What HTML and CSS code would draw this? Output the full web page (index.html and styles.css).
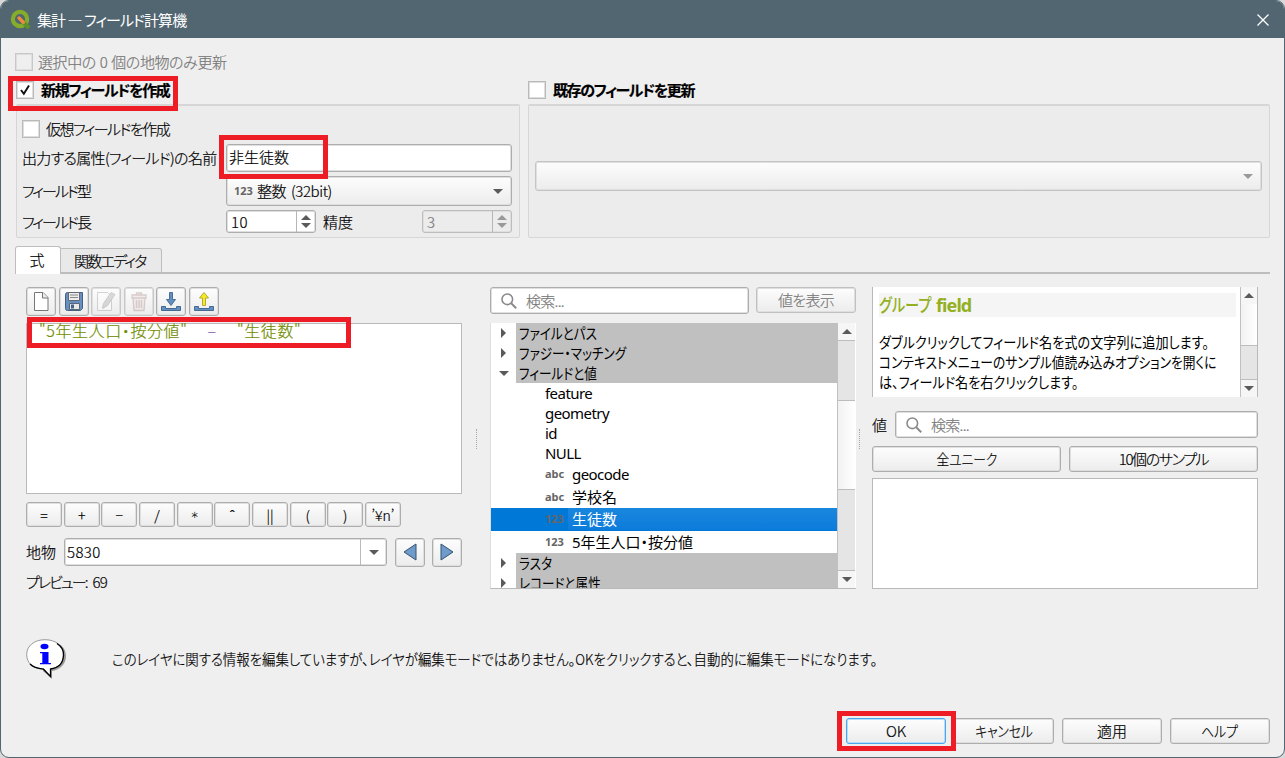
FILE: index.html
```html
<!DOCTYPE html>
<html lang="ja">
<head>
<meta charset="utf-8">
<title>集計 — フィールド計算機</title>
<link rel="stylesheet" href="styles.css">
</head>
<body>
<div class="window">
  <header class="titlebar">
    <svg class="logo" viewBox="0 0 22 22"><circle cx="10.5" cy="10.5" r="7.500" fill="none" stroke="#86ac2b" stroke-width="4.400"/><path d="M13 13l7 7" stroke="#5b922c" stroke-width="4.500"/><path d="M9.500 9.500l4.500 4.500" stroke="#ee8b3c" stroke-width="3.600" stroke-linecap="round"/></svg>
    <h1 class="t-title">集計 — フィールド計算機</h1>
    <svg class="close" viewBox="0 0 14 14"><path d="M1.500 1.500l11 11M12.500 1.500l-11 11" stroke="#fff" stroke-width="1.300"/></svg>
  </header>
  <main class="content">
    <div class="check-row only-selected"><span class="box off"></span><span class="t-only">選択中の 0 個の地物のみ更新</span></div>
    <div class="groups">
      <section class="group create">
        <div class="check-row head"><span class="box"><svg viewBox="0 0 18 18"><path d="M4.500 9l3.200 4.300L13.500 4" fill="none" stroke="#111" stroke-width="2.200"/></svg></span><b class="t-create">新規フィールドを作成</b></div>
        <div class="frame">
          <div class="check-row virtual"><span class="box"></span><span class="t-virtual">仮想フィールドを作成</span></div>
          <div class="form">
            <label class="t-outname">出力する属性(フィールド)の名前</label>
            <div class="input name">非生徒数</div>
            <label class="t-ftype">フィールド型</label>
            <div class="combo type"><i class="tag">123</i><span class="t-int">整数 (32bit)</span><i class="tri down"></i></div>
            <label class="t-ftype">フィールド長</label>
            <div class="spins">
              <div class="spin"><span class="t-ten">10</span><div class="arrows"><i class="tri up"></i><i class="tri down"></i></div></div>
              <span class="precision">精度</span>
              <div class="spin off"><span>3</span><div class="arrows"><i class="tri up"></i><i class="tri down"></i></div></div>
            </div>
          </div>
        </div>
      </section>
      <section class="group update">
        <div class="check-row head"><span class="box"></span><b class="t-update">既存のフィールドを更新</b></div>
        <div class="frame"><div class="combo off"><i class="tri down"></i></div></div>
      </section>
    </div>
    <nav class="tabs"><span class="tab active">式</span><span class="tab t-tab">関数エディタ</span><span class="rule"></span></nav>
    <div class="panes">
      <section class="pane-expression">
        <div class="toolbar">
          <button class="tool"><svg viewBox="0 0 30 30"><path d="M8.500 5.500h8.500L22 10.500V23.500H8.500z" fill="#fff" stroke="#777"/><path d="M16.500 5.500v5.500h5.500" fill="#eee" stroke="#777"/></svg></button>
          <button class="tool"><svg viewBox="0 0 30 30"><path d="M6.500 7.500q0-2 2-2h15v16l-2 2h-13q-2 0-2-2z" fill="#6590bf" stroke="#46617e"/><path d="M9.500 5.500h11v8h-11z" fill="#ededed" stroke="#667"/><path d="M11 8h8M11 10.500h8" stroke="#888"/><path d="M10.500 16.500h10v6h-10z" fill="#e8e8e8" stroke="#567"/><path d="M12 17.500h3v4h-3z" fill="#456487"/></svg></button>
          <button class="tool off"><svg viewBox="0 0 30 30"><path d="M6.500 5.500h10l4 4v14h-14z" fill="#fff" stroke="#999"/><path d="M11.500 21.500l1-5L20 5.500l4 2-7.500 11z" fill="#aaa" stroke="#888"/></svg></button>
          <button class="tool off"><svg viewBox="0 0 30 30"><path d="M9 11h12l-1 12.500H10zM8 8h14v3H8zM12.500 8V6h5v2" fill="#ecd9d9" stroke="#a88989" stroke-width="1.300"/><path d="M12.500 13v8M15 13v8M17.500 13v8" stroke="#a88989" stroke-width="1.400"/></svg></button>
          <button class="tool"><svg viewBox="0 0 30 30"><path d="M5.500 19.500h4v2h11v-2h4v4h-19z" fill="#638fc0" stroke="#456a92"/><path d="M13.500 5.500h3v7h3L15 18.500 10.500 12.500h3z" fill="#638fc0" stroke="#4d6f94"/></svg></button>
          <button class="tool"><svg viewBox="0 0 30 30"><path d="M5.500 19.500h4v2h11v-2h4v4h-19z" fill="#638fc0" stroke="#456a92"/><path d="M13.500 18.500h3V11h3L15 5.500 10.500 11h3z" fill="#f5ea26" stroke="#b7aa30"/></svg></button>
        </div>
        <div class="editor"><span class="t-f1">"5年生人口・按分値"</span><span class="op">–</span><span class="t-f2">"生徒数"</span></div>
        <div class="operators"><button>=</button><button>+</button><button>−</button><button>/</button><button class="star">∗</button><button>ˆ</button><button>||</button><button>(</button><button>)</button><button>’¥n’</button></div>
        <div class="feature"><label>地物</label><div class="input edit"><span class="t-value">5830</span><i class="drop"><i class="tri down"></i></i></div>
          <button class="tool"><svg viewBox="0 0 30 30"><path d="M21 6v16L9 14z" fill="#6e9bca" stroke="#34506f"/></svg></button>
          <button class="tool"><svg viewBox="0 0 30 30"><path d="M9 6v16l12-8z" fill="#6e9bca" stroke="#34506f"/></svg></button></div>
        <div class="preview"><span class="t-preview">プレビュー:</span><span class="t-result">69</span></div>
      </section>
      <i class="grip"></i>
      <section class="pane-functions">
        <div class="search-row"><div class="input search"><svg viewBox="0 0 18 18"><circle cx="7.300" cy="7.300" r="5.300" fill="none" stroke="#8a8a8a" stroke-width="1.600"/><path d="M11.200 11.200l5 5" stroke="#8a8a8a" stroke-width="2"/></svg><span class="t-search">検索...</span></div><button class="push off"><span class="t-show">値を表示</span></button></div>
        <div class="tree">
          <div class="rows">
            <div class="row parent"><i class="tri side"></i><div><span class="narrow">ファイルとパス</span></div></div>
            <div class="row parent"><i class="tri side"></i><div><span class="narrow">ファジー・マッチング</span></div></div>
            <div class="row parent"><i class="tri down"></i><div><span class="narrow">フィールドと値</span></div></div>
            <div class="row t-latin">feature</div>
            <div class="row t-latin">geometry</div>
            <div class="row t-latin">id</div>
            <div class="row t-latin">NULL</div>
            <div class="row tall"><i class="tag">abc</i><span class="t-latin">geocode</span></div>
            <div class="row tall"><i class="tag">abc</i><span>学校名</span></div>
            <div class="row tall selected"><i class="tag">123</i><span class="current">生徒数</span></div>
            <div class="row tall"><i class="tag">123</i><span>5年生人口・按分値</span></div>
            <div class="row parent"><i class="tri side"></i><div><span class="narrow">ラスタ</span></div></div>
            <div class="row parent"><i class="tri side"></i><div><span class="narrow">レコードと属性</span></div></div>
          </div>
          <div class="scroll"><i class="step"><i class="tri up"></i></i><i class="groove g-top"></i><i class="thumb"></i><i class="groove g-bottom"></i><i class="step"><i class="tri down"></i></i></div>
        </div>
      </section>
      <i class="grip second"></i>
      <section class="pane-help">
        <div class="help"><div class="doc"><h2><span class="t-group">グループ</span><b class="t-field">field</b></h2>
          <p><span class="t-l1">ダブルクリックしてフィールド名を式の文字列に追加します。</span><br><span class="t-l2">コンテキストメニューのサンプル値読み込みオプションを開くに</span><br><span class="t-l3">は、フィールド名を右クリックします。</span></p></div>
          <div class="scroll"><i class="step"><i class="tri up"></i></i><i class="thumb"></i><i class="groove"></i><i class="step"><i class="tri down"></i></i></div></div>
        <div class="value-row"><label>値</label><div class="input search"><svg viewBox="0 0 18 18"><circle cx="7.300" cy="7.300" r="5.300" fill="none" stroke="#8a8a8a" stroke-width="1.600"/><path d="M11.200 11.200l5 5" stroke="#8a8a8a" stroke-width="2"/></svg><span class="t-search">検索...</span></div></div>
        <div class="samples"><button class="push"><span class="narrow-mid">全ユニーク</span></button><button class="push"><span class="t-ten-samples">10個のサンプル</span></button></div>
        <div class="list"></div>
      </section>
    </div>
    <div class="notice">
      <svg viewBox="0 0 40 40"><path d="M22 2C33 3 40 8 40 17C40 26 33 31 26 32V40L17 32Z" fill="#999"/><path d="M19 .7C30 .7 37.500 7 37.500 15.500C37.500 24 32 29 24.500 30V38L17.500 30C7 30 .700 24 .700 15.500C.700 7 8 .700 19 .700z" fill="#fff" stroke="#999"/><path d="M31 4.500Q38 9 37.500 16.500C37 25 32 29 24.500 30V37.500L17.500 30.200Q8 29 4 25" fill="none" stroke="#000" stroke-width="1.300"/><ellipse cx="18.500" cy="7.500" rx="4" ry="2.700" fill="#00f"/><path d="M14 13h8.500v11H25v1.300H14V24h2.300v-9.700H14z" fill="#00f"/></svg>
      <span class="t-notice">このレイヤに関する情報を編集していますが、レイヤが編集モードではありません。OKをクリックすると、自動的に編集モードになります。</span>
    </div>
    <footer class="buttons"><button class="push default">OK</button><button class="push"><span class="narrow-mid">キャンセル</span></button><button class="push">適用</button><button class="push"><span class="narrow-mid">ヘルプ</span></button></footer>
  </main>
  <div class="mark m1"></div><div class="mark m2"></div><div class="mark m3"></div><div class="mark m4"></div>
</div>
</body>
</html>
```
FILE: styles.css
```css
* { box-sizing: border-box; }
body { margin: 0; background: #d8d8d8; font: 15px/20px "Noto Sans CJK JP", sans-serif; font-feature-settings: "palt"; color: #000; overflow: hidden; }
h1, h2, p { margin: 0; font-weight: 400; }
b { font-weight: 700; }
i { font-style: normal; }
button { font: inherit; color: inherit; padding: 0; margin: 0; font-feature-settings: inherit; }
svg { display: block; }

.window { position: relative; width: 1285px; height: 758px; border: 1px solid #516671; border-radius: 9px; background: #efefef; overflow: hidden; }
.titlebar { display: flex; align-items: center; height: 37px; padding: 0 14px 0 9px; background: #516671; color: #fff; }
.logo { width: 21px; height: 21px; }
.titlebar h1 { margin-left: 6px; font-size: 15px; white-space: nowrap; }
.close { width: 14px; height: 14px; margin-left: auto; }
.content { padding: 15px 14px 0 14px; white-space: nowrap; font-weight: 300; -webkit-text-stroke-width: .2px; }

/* text metrics */
.t-title { letter-spacing: -.92px; }
.t-only { letter-spacing: -.41px; word-spacing: 1px; }
.t-create { letter-spacing: -1.32px; }
.t-update { letter-spacing: -1.41px; }
.t-virtual { letter-spacing: -1.5px; }
.t-outname { letter-spacing: -.68px; }
.t-ftype { letter-spacing: -1.9px; }
.t-int { letter-spacing: -.42px; word-spacing: 2px; }
.t-ten, .t-value { letter-spacing: .4px; }
.t-tab { letter-spacing: -1.75px; }
.t-f1, .t-f2 { letter-spacing: .6px; }
.t-preview { letter-spacing: -1.9px; }
.t-result { letter-spacing: -.9px; }
.t-search, .t-show { letter-spacing: -.7px; }
.t-latin { letter-spacing: -.55px; }
.t-ten-samples { letter-spacing: -1.37px; }
.narrow, .t-group, .t-l1, .t-l2, .t-l3, .t-notice { display: inline-block; transform-origin: 0 50%; }
.narrow { transform: scaleX(.84); }
.narrow-mid { display: inline-block; transform: scaleX(.85); }
.t-group { transform: scaleX(.79); width: 57px; }
.t-field { letter-spacing: -.9px; }
.t-l1 { transform: scaleX(.877); }
.t-l2 { transform: scaleX(.849); }
.t-l3 { transform: scaleX(.875); }
.t-notice { transform: scaleX(.894); }

.check-row { display: flex; align-items: center; height: 18px; gap: 7px; }
.box { width: 18px; height: 18px; border: 1px solid #b9b9b9; box-shadow: inset 0 0 0 1px #dedede; background: #fff; flex: none; }
.box svg { width: 16px; height: 16px; }
.box.off { background: #efefef; border-color: #c8c8c8; }
.only-selected { color: #777; gap: 5px; }
.groups { display: flex; gap: 8px; margin-top: 10px; }
.head { padding-left: 1px; }
.update .head { padding-left: 0; }
.frame { height: 134px; margin-top: 5px; border: 1px solid #d6d6d6; border-top-width: 2px; background: #ececec; border-radius: 2px; }
.create { width: 505px; }
.update { width: 742px; }
.create .frame { margin-left: 1px; padding: 14px 7px 0 5px; }
.virtual { gap: 6px; }
.form { display: grid; grid-template-columns: 204px 286px; grid-template-rows: 28px 30px 23px; row-gap: 4px; margin-top: 6px; align-items: center; }

.input, .combo, .spin, .push, .tool, .operators button { border: 1px solid #adadad; box-shadow: inset 0 0 0 1px #dfdfdf; border-radius: 3px; background: linear-gradient(#fdfdfd, #ececec); }
.input { background: #fff; }
.input.name { height: 28px; padding: 2px 0 0 2px; }
.combo { display: flex; align-items: center; }
.type { height: 30px; padding: 0 8px 0 7px; }
.type .tri { margin-left: auto; }
.tag { font: 700 11px/14px "Noto Sans", sans-serif; color: #666; -webkit-text-stroke-width: 0; }
.type .tag { width: 23px; }
.spins { display: flex; height: 23px; align-items: center; }
.spin { display: flex; width: 90px; height: 23px; background: #fff; padding-left: 4px; line-height: 21px; }
.spin.off { background: #ececec; color: #777; border-color: #bdbdbd; }
.arrows { width: 19px; margin-left: auto; border-left: 1px solid #b6b6b6; display: flex; flex-direction: column; gap: 3px; align-items: center; justify-content: center; }
.precision { width: 106px; padding-left: 7px; }
.tri { display: block; width: 0; height: 0; border: 5px solid transparent; flex: none; }
.tri.down { border-bottom: 0; border-top-color: #5a5a5a; }
.tri.up { border-top: 0; border-bottom-color: #5a5a5a; }
.tri.side { border-right: 0; border-left-color: #5a5a5a; margin: 0 3px 0 2px; }
.off .tri.down { border-top-color: #999; }
.off .tri.up { border-bottom-color: #999; }
.update .frame { padding: 55px 7px 0 6px; }
.update .combo { height: 30px; justify-content: flex-end; padding-right: 8px; border-color: #c4c4c4; }

.tabs { display: flex; align-items: flex-end; height: 28px; margin-top: 8px; }
.tab { height: 26px; padding: 2px 0 0 13px; width: 101px; border: 1px solid #bdbdbd; border-bottom-width: 2px; border-left: 0; border-radius: 0 3px 0 0; background: #e9e9e9; }
.tab.active { width: 46px; height: 28px; padding: 3px 2px 0 0; text-align: center; background: #fff; border: 1px solid #bdbdbd; border-bottom: 0; border-radius: 3px 3px 0 0; }
.rule { flex: 1; height: 2px; background: #bdbdbd; }

.panes { display: flex; margin: 13px 11px 0; height: 302px; }
.pane-expression { width: 436px; }
.toolbar { display: flex; gap: 2.600px; height: 30px; }
.tool { width: 30px; height: 29px; overflow: hidden; }
.tool svg { width: 30px; height: 30px; margin: -1px; }
.tool.off { border-color: #c8c8c8; }
.tool.off svg { opacity: .4; }
.editor { height: 171px; margin-top: 6px; border: 1px solid #b9b9b9; background: #fff; color: #718c00; padding: 0 0 0 12px; display: flex; font-size: 16px; line-height: 13px; }
.editor .op { color: #8959a8; margin: 0 21px 0 20px; }
.operators { display: flex; justify-content: space-between; margin-top: 8px; width: 375px; }
.operators button { width: 36px; height: 25px; line-height: 22px; font-size: 14px; }
.operators .star { font-family: "DejaVu Sans", sans-serif; font-size: 13px; }
.feature { display: flex; margin-top: 11px; height: 30px; }
.feature label { width: 38px; line-height: 28px; }
.edit { display: flex; width: 323px; height: 28px; padding-left: 2px; line-height: 26px; margin-right: 8px; }
.drop { width: 26px; margin-left: auto; border-left: 1px solid #bbb; display: flex; align-items: center; justify-content: center; }
.feature .tool + .tool { margin-left: 7px; }
.preview { display: flex; gap: 6px; margin-top: 4px; }
.grip { width: 0; height: 20px; border-left: 1px dotted #aaa; margin: 142px 13px 0 14px; flex: none; }
.grip.second { margin: 142px 12px 0 3px; }

.pane-functions { width: 366px; }
.search-row { display: flex; justify-content: space-between; }
.search { display: flex; width: 259px; height: 27px; align-items: center; padding-left: 9px; gap: 8px; color: #777; }
.search svg { width: 18px; height: 18px; }
.push { height: 26px; width: 100px; line-height: 22px; text-align: center; }
.push.off { color: #777; border-color: #c0c0c0; }
.tree { display: flex; height: 266px; margin-top: 9px; border-bottom: 1px solid #b9b9b9; border-left: 1px solid #ddd; background: #fff; overflow: hidden; font-weight: 400; -webkit-text-stroke-width: 0; }
.rows { width: 346px; font-family: "Noto Sans", "Noto Sans CJK JP", sans-serif; }
.row { height: 20px; line-height: 20px; padding-left: 54px; display: flex; align-items: center; }
.row.parent { padding-left: 8px; }
.row.parent > div { margin-left: auto; width: 321px; padding-left: 3px; background: #c0c0c0; height: 20px; }
.row.tall { height: 22.500px; }
.row .tag { width: 27px; }
.selected { background: #0078d7; color: #fff; }
.selected .current { flex: 1; margin-left: -4px; padding-left: 4px; background: linear-gradient(#1a87de, #0c7cdb); line-height: 22px; }
.scroll { width: 18px; border-left: 1px solid #c0c0c0; display: flex; flex-direction: column; background: #fff; flex: none; }
.step { height: 17px; display: flex; align-items: center; justify-content: center; background: #f6f6f6; flex: none; }
.groove { background: #e5e5e5; border: solid #bdbdbd; border-width: 1px 0; }
.thumb { background: linear-gradient(90deg, #f2f2f2, #fff); }
.g-top { height: 61px; }
.g-bottom { height: 82px; }
.tree .thumb { height: 88px; }

.pane-help { width: 386px; flex: none; }
.help { display: flex; height: 110px; border: solid #b9b9b9; border-width: 0 1px; background: #fff; font-weight: 400; font-family: "Noto Sans", "Noto Sans CJK JP", sans-serif; -webkit-text-stroke-width: 0; }
.doc { width: 367px; padding: 6px 4px 0 6px; }
.doc h2 { display: flex; height: 24px; background: #f5f5f5; color: #93b023; font-size: 18px; line-height: 24px; font-weight: 500; }
.doc p { margin-top: 15px; }
.help .scroll { width: 17px; }
.help .thumb { height: 41px; }
.help .groove { height: 35px; }
.value-row { display: flex; margin-top: 14px; line-height: 27px; }
.value-row label { width: 23px; }
.value-row .search { width: 363px; }
.samples { display: flex; justify-content: space-between; margin-top: 8px; }
.samples .push { width: 189px; }
.list { height: 111px; margin-top: 6px; border: 1px solid #b9b9b9; background: #fff; }

.notice { display: flex; margin: 50px 0 0 11px; height: 40px; align-items: center; }
.notice svg { width: 40px; height: 40px; margin-right: 46px; flex: none; }
.buttons { display: flex; justify-content: flex-end; gap: 8px; margin-top: 39px; }
.push.default { border-color: #4aa5ea; box-shadow: inset 0 0 0 1px #b5dcf8; }

/* highlight frames laid over the dialog */
.mark { position: absolute; border: 5px solid #ee1c25; }
.m1 { left: 7px; top: 75px; width: 170px; height: 35px; }
.m2 { left: 218px; top: 134px; width: 109px; height: 44px; }
.m3 { left: 26px; top: 316px; width: 324px; height: 31px; }
.m4 { left: 836px; top: 710px; width: 119px; height: 40px; }
```
